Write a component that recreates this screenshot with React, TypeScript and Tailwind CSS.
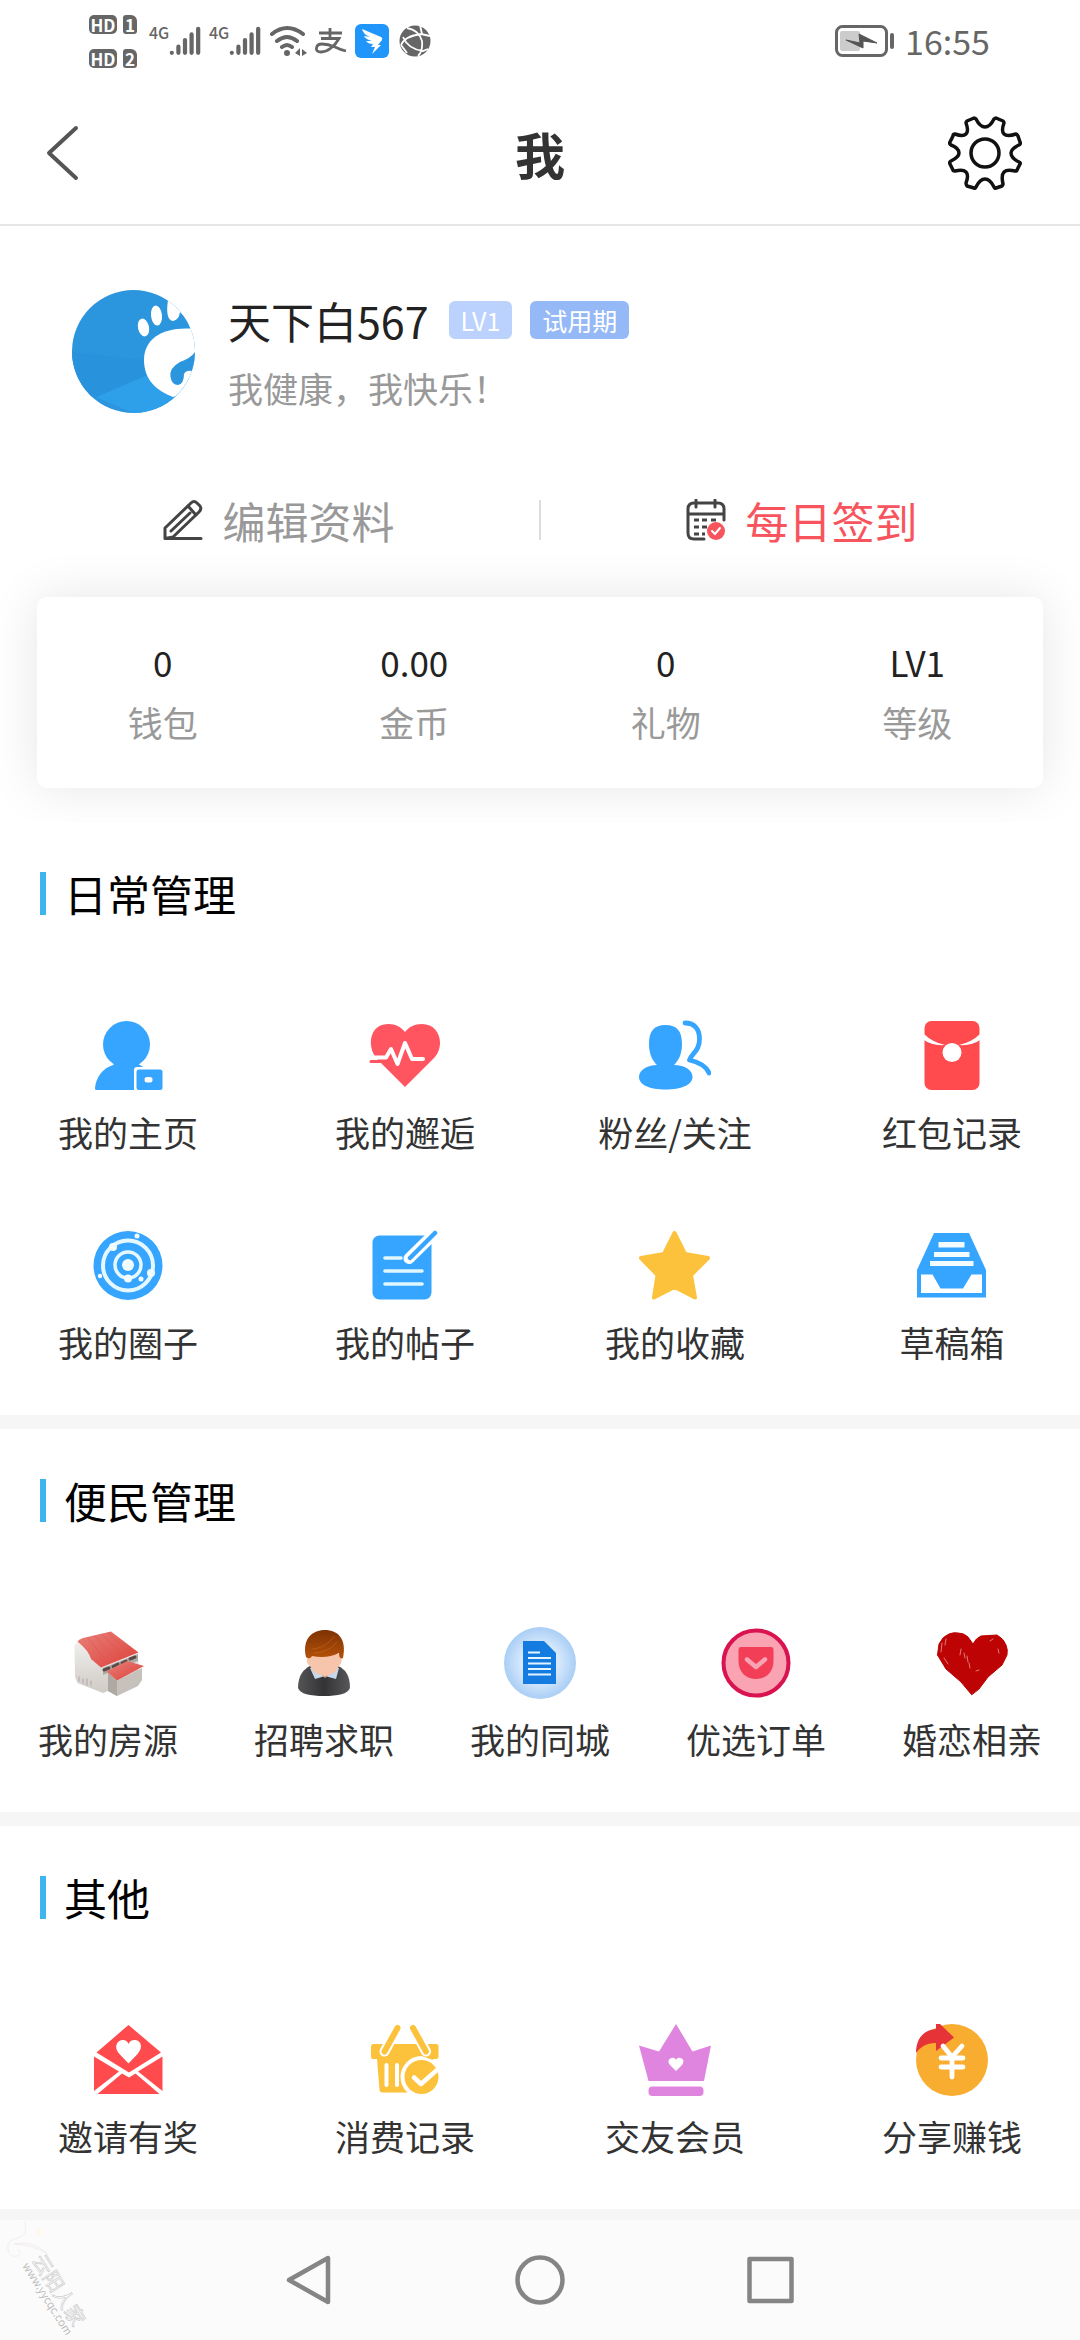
import React from 'react';

interface MenuItem {
    label: string;
    icon: React.ReactNode;
}

interface MenuSectionProps {
    title: string;
    items: MenuItem[];
    columns: 4 | 5;
}

const BLUE = '#36a5ff';
const RED = '#ff4b4d';
const YELLOW = '#fdc23c';

const Icon: React.FC<{ children: React.ReactNode }> = ({ children }) => (
    <svg viewBox="0 0 72 72" className="h-[72px] w-[72px]" fill="none" strokeLinecap="round" strokeLinejoin="round" aria-hidden="true">
        {children}
    </svg>
);

const HomepageIcon = () => (
    <Icon>
        <circle cx="34.500" cy="24.500" r="23.500" fill={BLUE} />
        <path d="M4 70 Q3 70 3 68 C4 57 11 48 21 45 Q23 44 21 42 H48 Q45 44 48 45 Q52 47 54 50 V70 Z" fill={BLUE} />
        <path d="M42 71 V50 Q42 47 45 47 H72 V72 Z" fill="#fff" />
        <rect x="44.500" y="49.500" width="26" height="20.500" rx="2.500" fill={BLUE} />
        <rect x="52.500" y="57" width="8" height="5.500" rx="2.500" fill="#fff" />
    </Icon>
);

const EncounterIcon = () => (
    <Icon>
        <path d="M36 67 L9 40 C-3 28 0 4 19 4 C27 4 32 7 36 12 C40 7 45 4 53 4 C72 4 77 28 63 40 Z" fill="#ff5561" />
        <path d="M0 37.500 H17 L22 29 L28.500 44 L36 23 L43 39 H54" stroke="#fff" strokeWidth="4" />
        <path d="M2 41.500 H14" stroke="#ff5561" strokeWidth="3" />
    </Icon>
);

const FansIcon = () => (
    <Icon>
        <path d="M26.500 5 C38 5 43 11 43 24 C43 35 39 41 35 45 C46 45 53.500 50 53.500 57 C53.500 65 42 69.500 26.500 69.500 C11 69.500 0 65 0 57 C0 50 8 45 18 45 C14 41 10 35 10 24 C10 11 15 5 26.500 5 Z" fill={BLUE} />
        <path d="M46 3 C56 3 60.500 10 60.500 19 C60.500 31 53 33 50.500 40 C59 42 67 45 70 53" stroke={BLUE} strokeWidth="4.800" />
    </Icon>
);

const RedPacketIcon = () => (
    <Icon>
        <rect x="8.500" y="1" width="55" height="69" rx="7" fill={RED} />
        <path d="M8 14 Q16 22 29 25 Q16 26 8 20 Z M64 14 Q56 22 43 25 Q56 26 64 20 Z" fill="#fff" />
        <circle cx="36" cy="32.500" r="9.500" fill="#fff" />
    </Icon>
);

const CircleIcon = () => (
    <Icon>
        <circle cx="36" cy="35.500" r="34.500" fill={BLUE} />
        <g stroke="#e6f8ff">
            <circle cx="36" cy="35.500" r="25" strokeWidth="4" />
            <circle cx="36" cy="35" r="13" strokeWidth="3.500" />
        </g>
        <g fill="#f2fcff">
            <circle cx="36" cy="35" r="6" />
            <circle cx="21" cy="17" r="4" />
            <circle cx="45" cy="6" r="2.500" />
            <circle cx="8" cy="46" r="2.200" />
            <circle cx="59" cy="43" r="4" />
            <circle cx="36" cy="48.500" r="4" />
            <circle cx="49" cy="49" r="2.500" />
        </g>
    </Icon>
);

const PostIcon = () => (
    <Icon>
        <rect x="3.500" y="5.500" width="59" height="64" rx="7" fill={BLUE} />
        <path d="M16 28 H32 M16 41 H53 M16 54 H53" stroke="#e0f7ff" strokeWidth="3.600" />
        <path d="M68 1 L40 28.500" stroke="#fff" strokeWidth="11" />
        <path d="M66 3 L41 28" stroke={BLUE} strokeWidth="4.500" />
    </Icon>
);

const FavoriteIcon = () => (
    <Icon>
        <path d="M35.500 3 L46 24 L69 28 L52 45 L56 67.500 L35.500 57 L15 67.500 L18.500 45 L2 28 L25 24 Z" fill={YELLOW} stroke={YELLOW} strokeWidth="4" />
    </Icon>
);

const DraftIcon = () => (
    <Icon>
        <path d="M18 3 H53 L70 40 V67.500 H1 V40 Z" fill={BLUE} />
        <path d="M22.500 12 H48.500 V17.500 H22.500 Z M18 22 H53.500 V27 H18 Z M14 31 H57.500 V36 H14 Z" fill="#f2fcff" />
        <path d="M5 44.500 H16.500 L24.500 58.500 H47 L55.500 44.500 H66 V63 H5 Z" fill="#fff" />
    </Icon>
);

const HouseIcon = () => (
    <Icon>
        <defs>
            <linearGradient id="wall" x1="0" y1="0" x2="0" y2="1">
                <stop offset="0" stopColor="#f1f0ee" />
                <stop offset="1" stopColor="#cfcbc5" />
            </linearGradient>
            <linearGradient id="roof" x1="0" y1="0" x2="1" y2="1">
                <stop offset="0" stopColor="#e8817a" />
                <stop offset="1" stopColor="#dd4038" />
            </linearGradient>
        </defs>
        <path d="M2.500 18 L7 13 L30 40 L66 26 L67 50 L31 66 L5.500 56 L3 50 Z" fill="url(#wall)" />
        <path d="M31 41 L66 27 V34 L31 48 Z" fill="#b0aaa5" />
        <path d="M32 43 L37 41 M41 39.500 L46 37 M50 36 L54 34 M58 32 L63 30" stroke="#5b4a48" strokeWidth="3" />
        <path d="M5.500 14.500 Q7 12 11 11 L39 4.500 L66.500 25.500 L29 40.500 L19 32 Q17 24 5.500 14.500 Z" fill="url(#roof)" />
        <path d="M16 11 L36 36 M23 9 L44 33 M30 7 L52 30 M36 6 L59 27" stroke="#d25750" strokeWidth="0.500" />
        <path d="M36 46 L45 54 L70 41 L70 53 L66 59 L45 69 L36 64 Z" fill="#c6c1ba" />
        <path d="M36 46 L45 54 V69 L36 64 Z" fill="#aea9a2" />
        <path d="M34.500 44.500 L55 34 L72 39 L45 53.500 Z" fill="url(#roof)" />
        <path d="M7 50 V54 M11 52 V56 M15 52 V58 M19 54 V58" stroke="#c0b4b4" strokeWidth="1.500" />
    </Icon>
);

const RecruitIcon = () => (
    <Icon>
        <defs>
            <linearGradient id="suit" x1="0" y1="0" x2="1" y2="0">
                <stop offset="0" stopColor="#555558" />
                <stop offset="0.500" stopColor="#333335" />
                <stop offset="1" stopColor="#58585b" />
            </linearGradient>
            <linearGradient id="hair" x1="0" y1="0" x2="0" y2="1">
                <stop offset="0" stopColor="#7e3204" />
                <stop offset="1" stopColor="#b45109" />
            </linearGradient>
        </defs>
        <path d="M10 61 C10 48 16 42 22 39 H50 C57 42 62 48 62 61 C60 67 50 69 36 69 C22 69 12 67 10 61 Z" fill="url(#suit)" />
        <path d="M22 41 L27 52 L37 49 L48 52 L51 41 Z" fill="#c5d8ec" />
        <path d="M29 44 H45 L37 51 Z" fill="#e0a286" />
        <path d="M20 28 Q17 36 22 39 Q26 48 37 49 Q47 48 51 39 Q55 36 53 27 Z" fill="#f6c5ab" />
        <path d="M18 30 C14 12 24 3 37 3 C50 3 59 12 55 31 Q51 33 51 26 Q39 32 24 29 Q22 33 18 30 Z" fill="url(#hair)" />
        <path d="M24 22 Q36 22 46 10 M26 26 Q40 26 49 15" stroke="#c8661a" strokeWidth="0.600" />
    </Icon>
);

const CityIcon = () => (
    <Icon>
        <defs>
            <radialGradient id="city">
                <stop offset="0.500" stopColor="#d9eafd" />
                <stop offset="1" stopColor="#a9cef5" />
            </radialGradient>
        </defs>
        <circle cx="36" cy="36" r="36" fill="url(#city)" />
        <path d="M19 14 H40 L52 26 V57 H19 Z" fill="#147be0" />
        <path d="M24 25.500 H36 M24 31 H47 M24 36.500 H47 M24 42 H47 M24 47.500 H47" stroke="#e1f4ff" strokeWidth="2" strokeLinecap="butt" />
    </Icon>
);

const OrderIcon = () => (
    <Icon>
        <circle cx="36" cy="36" r="32.500" fill="#f9a3b3" stroke="#d9134f" strokeWidth="4" />
        <path d="M21 20 H51 Q53.500 20 53.500 23 V34 C53.500 45 46 52 36 52 C26 52 18.500 45 18.500 34 V23 Q18.500 20 21 20 Z" fill="#f23f57" />
        <path d="M27 32.500 L36 40 L45 32.500" stroke="#f9a3b3" strokeWidth="4.500" />
    </Icon>
);

const DatingIcon = () => (
    <Icon>
        <path d="M35.500 67.500 L25 55 L10 42 L1.500 28 L3 17 Q7 9 13 7 Q18 5 22 6 Q28 6 32 10 L37 17 Q40 11 45 9 L61 8 Q68 12 70 18 Q72 23 71 28 L66 38 L52 50 L43 62 Z" fill="#bd0303" stroke="#b00" strokeWidth="1" />
        <path d="M6 16 L5 25 M10 12 L9 18 M8 31 L12 37 M25 22 L24 28 M31 29 L32 35 M28 26 L29 31 M33 36 L34 41 M54 14 L57 12 M62 22 L63 26 M40 44 L43 43" stroke="#e89a9a" strokeWidth="0.800" />
    </Icon>
);

const InviteIcon = () => (
    <Icon>
        <path d="M36.500 1 L69 28.500 L37 48.500 L4.500 28.500 Z" fill={RED} />
        <path d="M2 32.500 L27 47.500 L2 67 Z M70.500 32.500 L46 47.500 L70.500 67 Z" fill={RED} />
        <path d="M5.500 70 L30 49.500 L37 53.500 L43.500 49.500 L67.500 70 Z" fill={RED} />
        <path d="M36.500 39.500 L27 29.500 C21 22 26 16 31 16 Q35 16 36.500 20 Q38 16 42.500 16 C48 16 52 22 46 29.500 Z" fill="#fff" />
    </Icon>
);

const ConsumeIcon = () => (
    <Icon>
        <path d="M4 20 H67 Q69.500 20 69.500 22.500 V33 Q69.500 35 67 35 H64 L61 68.500 H13 Q11 68.500 10.500 66 L8 35 H4 Q2 35 2 33 V22.500 Q2 20 4 20 Z" fill={YELLOW} />
        <path d="M28.500 4 L15.500 27.500 M44 4 L57 27.500" stroke="#fff" strokeWidth="10" />
        <path d="M28.500 4 L15.500 27.500 M44 4 L57 27.500" stroke={YELLOW} strokeWidth="6" />
        <path d="M17.500 41 V61 M28 41 V61" stroke="#fff" strokeWidth="4" />
        <path d="M52.500 32 A21 21 0 1 0 52.500 74 H72 V36 H64 Z" fill="#fff" />
        <circle cx="52.500" cy="53" r="17" fill={YELLOW} />
        <path d="M45 53.500 L52 60 L68 46" stroke="#fff" strokeWidth="4.500" />
    </Icon>
);

const MemberIcon = () => (
    <Icon>
        <path d="M0 21.500 L20 27.500 L37 0 L53.500 27.500 L72 21.500 L65 57 H9.500 Z" fill="#df85df" />
        <rect x="9.500" y="62.500" width="55" height="9.500" rx="4" fill="#df85df" />
        <path d="M37 47 L31 41 C27 36 32 33 35 34 Q36.500 34.500 37 36 Q37.500 34.500 39 34 C42 33 47 36 43 41 Z" fill="#fff" />
    </Icon>
);

const ShareIcon = () => (
    <Icon>
        <circle cx="36" cy="36" r="36" fill="#f9ad30" />
        <path d="M0 29 C0 14 8 6 20 5 V0 H24 L38 13.500 L20 27 V19 Q8 18 0 29 Z" fill="#e53338" />
        <path d="M27 22 L36 33 L46 22 M25 34 H47 M25 43 H47 M36 34 V53" stroke="#fff" strokeWidth="4.800" />
    </Icon>
);

const dailyItems: MenuItem[] = [
    { label: '我的主页', icon: <HomepageIcon /> },
    { label: '我的邂逅', icon: <EncounterIcon /> },
    { label: '粉丝/关注', icon: <FansIcon /> },
    { label: '红包记录', icon: <RedPacketIcon /> },
    { label: '我的圈子', icon: <CircleIcon /> },
    { label: '我的帖子', icon: <PostIcon /> },
    { label: '我的收藏', icon: <FavoriteIcon /> },
    { label: '草稿箱', icon: <DraftIcon /> },
];

const serviceItems: MenuItem[] = [
    { label: '我的房源', icon: <HouseIcon /> },
    { label: '招聘求职', icon: <RecruitIcon /> },
    { label: '我的同城', icon: <CityIcon /> },
    { label: '优选订单', icon: <OrderIcon /> },
    { label: '婚恋相亲', icon: <DatingIcon /> },
];

const otherItems: MenuItem[] = [
    { label: '邀请有奖', icon: <InviteIcon /> },
    { label: '消费记录', icon: <ConsumeIcon /> },
    { label: '交友会员', icon: <MemberIcon /> },
    { label: '分享赚钱', icon: <ShareIcon /> },
];

const stats = [
    { value: '0', label: '钱包' },
    { value: '0.00', label: '金币' },
    { value: '0', label: '礼物' },
    { value: 'LV1', label: '等级' },
];

const MenuSection: React.FC<MenuSectionProps> = ({ title, items, columns }) => {
    const gridClass = columns === 5
        ? 'grid grid-cols-5'
        : 'grid grid-cols-4 gap-y-[74px] [&>*:nth-child(4n+1)]:pr-[14px] [&>*:nth-child(4n)]:pl-[14px]';

    return (
        <section className="bg-white pt-[50px] pb-[49px]">
            <h2 className="ml-10 flex h-[43px] items-center border-l-[6px] border-[#3eb5ef] pl-[18px] text-[43px] leading-[43px] text-black">{title}</h2>
            <div className={`mt-[105px] ${gridClass}`}>
                {items.map(item => (
                    <button key={item.label} type="button" className="flex flex-col items-center gap-4">
                        {item.icon}
                        <span className="text-[35px] leading-[48px] whitespace-nowrap text-[#333]">{item.label}</span>
                    </button>
                ))}
            </div>
        </section>
    );
};

const HdBadge: React.FC<{ sim: string }> = ({ sim }) => (
    <div className="flex gap-1.5 text-[17px] leading-[19px] font-bold text-white">
        <span className="w-[28px] rounded-[5px] bg-[#666] text-center">HD</span>
        <span className="w-[14px] rounded-[3px] rounded-tr-[6px] bg-[#666] text-center">{sim}</span>
    </div>
);

const Signal = () => (
    <div className="flex items-start">
        <span className="w-5 text-[16px] leading-[14px] font-medium">4G</span>
        <svg viewBox="0 0 34 32" className="h-8 w-8" stroke="currentColor" strokeWidth="4.500" strokeLinecap="round" aria-hidden="true">
            <path d="M3 28.500 V28.600 M10 28.500 V22 M17 28.500 V15 M24 28.500 V9 M31 28.500 V3" />
        </svg>
    </div>
);

const StatusBar = () => (
    <div className="flex h-[82px] items-center justify-between pr-[90px] pl-[89px] text-[#666]">
        <div className="flex items-center">
            <div className="flex flex-col gap-[15px]">
                <HdBadge sim="1" />
                <HdBadge sim="2" />
            </div>
            <div className="ml-3 flex gap-2">
                <Signal />
                <Signal />
            </div>
            <svg viewBox="0 0 38 32" className="ml-2 h-8 w-[38px]" fill="none" stroke="currentColor" strokeWidth="4" strokeLinecap="round" aria-hidden="true">
                <path d="M3 9 Q18 -3 34 9 M8 16 Q18 8 28 16 M13 22 Q18 18 23 22" />
                <circle cx="18" cy="28" r="3" fill="currentColor" stroke="none" />
                <path d="M26 28 L31 23 V31 M33 31 V24 L38 28 Z" fill="currentColor" stroke="none" />
            </svg>
            {/* Alipay mark: its lower left stroke curls into a loop */}
            <svg viewBox="0 0 32 26" className="ml-2 h-[26px] w-8" fill="none" stroke="currentColor" strokeWidth="2.800" aria-hidden="true">
                <path d="M4 5 H27 M15 0 V10 M6 10.500 H24 Q21 16 16 20 Q11 24 6 24 Q1 24 1.500 20 Q2 16 7 16 Q13 16 20 19 Q26 22 31 23" />
            </svg>
            <svg viewBox="0 0 34 34" className="ml-2 h-[34px] w-[34px]" aria-hidden="true">
                <rect width="34" height="34" rx="6" fill="#2196fa" />
                <path d="M7 5 L26 13 Q28 14 27 16 L23 21 H26 L17 30 L20 23 H16 L18 20 Q13 20 11 17 L17 17 Q10 15 9 12 L15 13 Q8 10 7 5 Z" fill="#fff" />
            </svg>
            <svg viewBox="0 0 32 32" className="ml-2.5 h-8 w-8" fill="none" aria-hidden="true">
                <circle cx="16" cy="16" r="15.500" fill="currentColor" />
                <path d="M8 3 Q20 5 23 16 Q24 26 19 31 M2 20 Q6 11 22 9 L31 11 M4 12 Q9 24 24 26 L29 24 M21 0 L23 9 M2 20 L8 28" stroke="#fff" strokeWidth="1.800" />
            </svg>
        </div>
        <div className="flex items-center gap-2.5">
            <svg viewBox="0 0 60 32" className="h-8 w-[60px]" fill="none" aria-hidden="true">
                <rect x="1.500" y="1.500" width="50" height="29" rx="6" stroke="currentColor" strokeWidth="3" />
                <rect x="5" y="6" width="20" height="20" rx="2" fill="#ccc" />
                <path d="M11 15 L25 18 L24 9 L42 18 L28 16 L28 23 Z" fill="#555" stroke="#555" />
                <path d="M57 10 V22" stroke="currentColor" strokeWidth="4" strokeLinecap="round" />
            </svg>
            <span className="text-[34px] leading-[40px]">16:55</span>
        </div>
    </div>
);

const TopBar = () => (
    <header className="grid h-[144px] grid-cols-3 items-center border-b-2 border-[#e5e5e5] px-[46px]">
        <button type="button" aria-label="返回" className="justify-self-start">
            <svg viewBox="0 0 34 56" className="h-[56px] w-[34px]" fill="none" stroke="#555" strokeWidth="4" strokeLinecap="round" strokeLinejoin="round">
                <path d="M30 3 L3 28 L30 53" />
            </svg>
        </button>
        <h1 className="justify-self-center text-[50px] leading-[60px] font-bold text-[#333]">我</h1>
        <button type="button" aria-label="设置" className="justify-self-end pr-3">
            <svg viewBox="0 0 74 74" className="h-[74px] w-[74px]" fill="none" stroke="#111" strokeWidth="3.500" strokeLinejoin="round">
                <path d="M19 5 L26 2 Q27 2 28 3 Q32 11 37 11 Q42 11 46 3 Q47 2 48 2 L55 5 Q56 6 56 7 Q53 15 56 18 Q59 21 68 18 Q69 18 70 20 L72 26 Q73 28 71 29 Q63 33 63 37 Q63 42 71 46 Q73 47 72 48 L69 54 Q69 55 67 55 Q59 53 56 56 Q53 59 55 68 Q55 69 54 70 L48 72 Q47 73 46 71 Q42 63 37 63 Q32 63 28 71 Q27 73 26 72 L19 70 Q18 69 18 67 Q21 59 18 56 Q15 53 7 55 Q5 55 5 54 L2 48 Q1 46 3 45 Q11 41 11 37 Q11 32 3 29 Q1 28 2 26 L5 20 Q5 18 7 18 Q15 21 18 18 Q21 15 18 7 Q18 6 19 5 Z" />
                <circle cx="37" cy="37" r="14" />
            </svg>
        </button>
    </header>
);

const Avatar = () => (
    <svg viewBox="0 0 123 123" className="h-[123px] w-[123px] shrink-0" role="img" aria-label="头像">
        <defs>
            <clipPath id="avatar">
                <circle cx="61.500" cy="61.500" r="61.500" />
            </clipPath>
        </defs>
        <g clipPath="url(#avatar)">
            <rect width="123" height="123" fill="#2b95de" />
            <path d="M76 82 L24 107 L61 123 H123 V90 Z" fill="#2ea0ea" />
            <path d="M0 62 L74 70 L78 84 L22 108 L0 100 Z" fill="#2992dc" />
            <g fill="#fff">
                <ellipse cx="71.500" cy="37.500" rx="5.500" ry="9" transform="rotate(-12 71.5 37.5)" />
                <ellipse cx="84.500" cy="25.500" rx="5.500" ry="10" transform="rotate(-6 84.5 25.5)" />
                <path d="M96 10 Q93 30 101 31 Q107 30 108 22 Q116 30 119 40 L123 40 V0 H96 Z" />
                <path d="M123 39 C92 36 72 48 72 70 C72 90 85 101 101 107 L123 100 Z" />
            </g>
            <path d="M123 62 Q119 68 108 72 Q97 78 98.500 87 Q100 95 106 95 Q112 94 112 84 Q114 80 120 81 L123 78 Z" fill="#2b95de" />
        </g>
    </svg>
);

const Profile = () => (
    <div className="flex gap-[33px] px-[72px] pt-16">
        <Avatar />
        <div>
            <div className="flex items-center pt-0.5">
                <span className="text-[43px] leading-[56px] text-[#222]">天下白567</span>
                <span className="ml-5 rounded-[6px] bg-[#bad2fd] px-3 text-[25px] leading-[38px] text-white">LV1</span>
                <span className="ml-[18px] rounded-[6px] bg-[#95b8f6] px-3 text-[25px] leading-[38px] text-white">试用期</span>
            </div>
            <p className="mt-4 text-[35px] leading-[48px] text-[#999]">我健康，我快乐！</p>
        </div>
    </div>
);

const Actions = () => (
    <div className="mt-[85px] flex h-[44px] items-center px-[18px] text-[43px] leading-[44px]">
        <button type="button" className="flex flex-1 items-center justify-center gap-5 text-[#999]">
            <svg viewBox="0 0 40 42" className="h-[42px] w-10" fill="none" stroke="#444" strokeWidth="3" strokeLinejoin="round" strokeLinecap="round" aria-hidden="true">
                <path d="M2 39.500 V29 L28 4 Q31 1 34 4 L37 7 Q39 10 36 13 L10 38 L2 39.500 H38" />
                <path d="M25 7 L33 16 M8 32 L27 14" />
            </svg>
            编辑资料
        </button>
        <div className="h-10 w-[2px] bg-[#ddd]" />
        <button type="button" className="flex flex-1 items-center justify-center gap-5 text-[#f8545e]">
            <svg viewBox="0 0 40 42" className="h-[42px] w-10" fill="none" stroke="#444" strokeWidth="3" strokeLinecap="round" aria-hidden="true">
                <path d="M18 40 H8 Q2 40 2 34 V10 Q2 4 8 4 H32 Q38 4 38 10 V21 M2 15 H38 M10 1 V8 M29 1 V8" />
                <path d="M8 21 H13 M16 21 H21 M25 21 H30 M8 28 H13 M16 28 H21 M8 35 H13 M16 35 H19" strokeLinecap="butt" />
                <circle cx="30" cy="32" r="9" fill="#f8545e" stroke="none" />
                <path d="M26 32 L29 35 L34 29" stroke="#fff" strokeWidth="2" />
            </svg>
            每日签到
        </button>
    </div>
);

const StatsCard = () => (
    <div className="mx-[37px] mt-[55px] mb-[34px] grid grid-cols-4 rounded-[10px] bg-white pt-[41px] pb-[42px] text-center shadow-[0_0_50px_rgba(0,0,0,0.1)]">
        {stats.map(stat => (
            <button key={stat.label} type="button" className="flex flex-col items-center gap-3">
                <span className="text-[35px] leading-[48px] text-[#222]">{stat.value}</span>
                <span className="text-[35px] leading-[48px] text-[#999]">{stat.label}</span>
            </button>
        ))}
    </div>
);

const SystemNav = () => (
    <nav className="relative flex h-[120px] items-center justify-center gap-[181px] bg-[#fbfbfb]">
        <svg viewBox="0 0 110 120" className="absolute bottom-0 left-0 h-[120px] w-[110px]" fill="none" aria-hidden="true">
            <path d="M24 2 Q30 14 18 18 Q6 20 8 30 Q10 38 18 36 Q22 33 18 29 M14 24 Q32 20 48 34 Q30 24 14 24" stroke="#f4eeee" />
            <circle cx="38" cy="12" r="4" fill="#fdf8f0" />
            <g transform="translate(28 42) rotate(58)">
                <text x="0" y="-4" fontSize="20" stroke="#c8c8c8" strokeWidth="0.600" fill="none">云阳人家</text>
                <text x="0" y="7" fontSize="11" fill="#bbb">www.yycqc.com</text>
            </g>
        </svg>
        <button type="button" aria-label="后退">
            <svg viewBox="0 0 50 50" className="h-[50px] w-[50px]" fill="none" stroke="#858585" strokeWidth="4.500" strokeLinejoin="round">
                <path d="M44 3 V47 L5 25 Z" />
            </svg>
        </button>
        <button type="button" aria-label="主屏幕">
            <svg viewBox="0 0 50 50" className="h-[50px] w-[50px]" fill="none" stroke="#858585" strokeWidth="4.500">
                <circle cx="25" cy="25" r="22.500" />
            </svg>
        </button>
        <button type="button" aria-label="最近任务">
            <svg viewBox="0 0 50 50" className="h-[50px] w-[50px]" fill="none" stroke="#858585" strokeWidth="4.500" strokeLinejoin="round">
                <rect x="3.500" y="4" width="42" height="42" />
            </svg>
        </button>
    </nav>
);

const App: React.FC = () => {
    return (
        <div className="flex min-h-screen flex-col bg-white font-['Noto_Sans_CJK_SC',sans-serif]">
            <StatusBar />
            <TopBar />
            <main className="flex-grow bg-[#f6f6f6]">
                <div className="flow-root bg-white">
                    <Profile />
                    <Actions />
                    <StatsCard />
                </div>
                <div className="flex flex-col gap-[14px] pb-[11px]">
                    <MenuSection title="日常管理" items={dailyItems} columns={4} />
                    <MenuSection title="便民管理" items={serviceItems} columns={5} />
                    <MenuSection title="其他" items={otherItems} columns={4} />
                </div>
            </main>
            <SystemNav />
        </div>
    );
};

export default App;
